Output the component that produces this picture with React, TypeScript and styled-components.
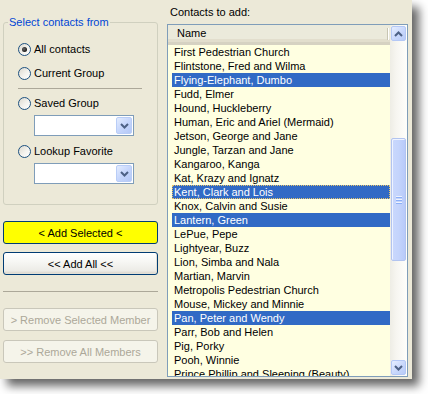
import React from 'react';
import styled, { createGlobalStyle } from 'styled-components';

const Global = createGlobalStyle`
  html, body { margin: 0; padding: 0; background: #ffffff; }
  body { font-family: "Liberation Sans", Arial, sans-serif; font-size: 11px; color: #000; }
  * { box-sizing: border-box; }
`;

const Stage = styled.div`
  width: 428px;
  height: 394px;
  overflow: hidden;
`;

const Window = styled.div`
  width: 412px;
  height: 379px;
  background: #ece9d8;
  box-shadow: 7px 7px 9px rgba(0, 0, 0, 0.6);
  display: flex;
  padding: 0 4px 0 3px;
  gap: 9px;
`;

const LeftColumn = styled.div`
  width: 155px;
  display: flex;
  flex-direction: column;
  padding-top: 16px;
`;

const GroupBox = styled.fieldset`
  margin: 0;
  padding: 0 0 19px 0;
  border: 1px solid #d0d0bf;
  border-radius: 3px;
  height: 189px;
`;

const Legend = styled.legend`
  margin-left: 4px;
  padding: 0 1px;
  color: #0046d5;
  line-height: 13px;
`;

const GroupBody = styled.div`
  display: flex;
  flex-direction: column;
  padding-left: 14px;
`;

const RadioRow = styled.label<{ $top: number }>`
  display: flex;
  align-items: center;
  height: 13px;
  line-height: 13px;
  margin-top: ${(p) => p.$top}px;
  white-space: nowrap;
`;

const RadioCircle = styled.span<{ $checked?: boolean }>`
  width: 13px;
  height: 13px;
  border-radius: 50%;
  border: 1px solid #1c5180;
  background: linear-gradient(135deg, #dcd9cf 0%, #f4f3ee 55%, #ffffff 100%);
  display: flex;
  align-items: center;
  justify-content: center;
  flex: none;
  &::after {
    content: '';
    display: ${(p) => (p.$checked ? 'block' : 'none')};
    width: 5px;
    height: 5px;
    border-radius: 50%;
    background: radial-gradient(circle at 40% 40%, #6a6a6a 0%, #1a1a1a 70%);
  }
`;

const RadioText = styled.span`
  margin-left: 3px;
`;

const GroupSeparator = styled.div`
  height: 1px;
  width: 124px;
  margin-top: 8px;
  background: #aca899;
`;

const Combo = styled.div`
  width: 100px;
  height: 21px;
  margin: 5px 0 0 16px;
  border: 1px solid #7f9db9;
  background: #fff;
  display: flex;
  justify-content: flex-end;
  padding: 1px;
`;

const ComboButton = styled.div`
  width: 16px;
  height: 100%;
  border-radius: 2px;
  border: 1px solid #b9cdf7;
  background: linear-gradient(135deg, #e3ecfe 0%, #c6d6fc 50%, #b4c8f6 100%);
  display: flex;
  align-items: center;
  justify-content: center;
`;

const ButtonStack = styled.div`
  display: flex;
  flex-direction: column;
  margin-top: 16px;
`;

const XPButton = styled.button<{ $variant?: 'yellow' | 'normal' | 'disabled'; $top: number }>`
  width: 155px;
  height: 23px;
  margin: ${(p) => p.$top}px 0 0 0;
  padding: 0;
  font-family: inherit;
  font-size: 11px;
  border-radius: 3px;
  border: 1px solid ${(p) => (p.$variant === 'disabled' ? '#c9c7ba' : '#003c74')};
  color: ${(p) => (p.$variant === 'disabled' ? '#aca899' : '#000')};
  background: ${(p) =>
    p.$variant === 'yellow'
      ? '#ffff00'
      : p.$variant === 'disabled'
      ? '#f5f4ea'
      : 'linear-gradient(180deg, #ffffff 0%, #f7f7f4 40%, #ecebe6 85%, #d6d0c5 100%)'};
  box-shadow: ${(p) => (p.$variant === 'normal' ? 'inset -1px -1px 0 #e3e0d6' : 'none')};
`;

const Separator = styled.div`
  height: 1px;
  width: 155px;
  margin-top: 16px;
  background: #aca899;
`;

const RightColumn = styled.div`
  width: 241px;
  display: flex;
  flex-direction: column;
`;

const Caption = styled.div`
  height: 24px;
  padding: 6px 0 0 3px;
  line-height: 13px;
`;

const ListBox = styled.div`
  height: 353px;
  border: 1px solid #7f9db9;
  background: #ffffe1;
  display: flex;
`;

const ListContent = styled.div`
  flex: 1;
  display: flex;
  flex-direction: column;
  overflow: hidden;
`;

const Header = styled.div`
  height: 20px;
  flex: none;
  display: flex;
  background: #ebeadb;
  border-bottom: 3px solid #d6d2c2;
  box-shadow: inset 0 -3px 0 #e2decd;
`;

const HeaderCell = styled.div`
  width: 220px;
  padding-left: 9px;
  line-height: 17px;
  position: relative;
  &::after {
    content: '';
    position: absolute;
    right: 0;
    top: 3px;
    width: 1px;
    height: 12px;
    background: #c7c5b2;
    box-shadow: 1px 0 0 #fff;
  }
`;

const Row = styled.div<{ $selected?: boolean; $focused?: boolean }>`
  height: 14px;
  flex: none;
  margin-left: 4px;
  padding-left: 2px;
  line-height: 14px;
  white-space: nowrap;
  background: ${(p) => (p.$selected ? '#316ac5' : 'transparent')};
  color: ${(p) => (p.$selected ? '#fff' : '#000')};
  outline: ${(p) => (p.$focused ? '1px dotted #e8c66a' : 'none')};
  outline-offset: -1px;
`;

const ScrollBar = styled.div`
  width: 17px;
  flex: none;
  display: flex;
  flex-direction: column;
  align-items: center;
  padding: 1px 0;
  background: linear-gradient(90deg, #eeede5 0%, #f7f6f1 40%, #fefefb 100%);
`;

const ScrollButton = styled.div`
  width: 15px;
  height: 15px;
  flex: none;
  border-radius: 2px;
  border: 1px solid #b4c8f6;
  background: linear-gradient(135deg, #e6eeff 0%, #c9d8fc 55%, #b8cbf7 100%);
  display: flex;
  align-items: center;
  justify-content: center;
`;

const Thumb = styled.div<{ $top: number; $height: number }>`
  width: 15px;
  flex: none;
  margin-top: ${(p) => p.$top}px;
  height: ${(p) => p.$height}px;
  border-radius: 2px;
  border: 1px solid #b2c4f0;
  background: linear-gradient(90deg, #cad8fd 0%, #c4d4fc 50%, #b8cafa 100%);
  box-shadow: inset 1px 1px 0 #eef3ff;
  display: flex;
  flex-direction: column;
  align-items: center;
  justify-content: center;
  gap: 1px;
`;

const Grip = styled.span`
  width: 6px;
  height: 1px;
  background: #eef2fd;
  box-shadow: 0 1px 0 #8cb0f8;
  margin-bottom: 1px;
`;

const Filler = styled.div`
  flex: 1;
`;

const Chevron = ({ up }: { up?: boolean }) => (
  <svg width="9" height="6" viewBox="0 0 9 6">
    <polyline
      points={up ? '1,5 4.5,1.5 8,5' : '1,1 4.5,4.5 8,1'}
      fill="none"
      stroke="#4d6185"
      strokeWidth="2"
    />
  </svg>
);

const contacts: { name: string; selected?: boolean; focused?: boolean }[] = [
  { name: 'First Pedestrian Church' },
  { name: 'Flintstone, Fred and Wilma' },
  { name: 'Flying-Elephant, Dumbo', selected: true },
  { name: 'Fudd, Elmer' },
  { name: 'Hound, Huckleberry' },
  { name: 'Human, Eric and Ariel (Mermaid)' },
  { name: 'Jetson, George and Jane' },
  { name: 'Jungle, Tarzan and Jane' },
  { name: 'Kangaroo, Kanga' },
  { name: 'Kat, Krazy and Ignatz' },
  { name: 'Kent, Clark and Lois', selected: true, focused: true },
  { name: 'Knox, Calvin and Susie' },
  { name: 'Lantern, Green', selected: true },
  { name: 'LePue, Pepe' },
  { name: 'Lightyear, Buzz' },
  { name: 'Lion, Simba and Nala' },
  { name: 'Martian, Marvin' },
  { name: 'Metropolis Pedestrian Church' },
  { name: 'Mouse, Mickey and Minnie' },
  { name: 'Pan, Peter and Wendy', selected: true },
  { name: 'Parr, Bob and Helen' },
  { name: 'Pig, Porky' },
  { name: 'Pooh, Winnie' },
  { name: 'Prince Phillip and Sleeping (Beauty)' },
];

export default function App() {
  return (
    <Stage>
      <Global />
      <Window>
        <LeftColumn>
          <GroupBox>
            <Legend>Select contacts from</Legend>
            <GroupBody>
              <RadioRow $top={14}>
                <RadioCircle $checked />
                <RadioText>All contacts</RadioText>
              </RadioRow>
              <RadioRow $top={11}>
                <RadioCircle />
                <RadioText>Current Group</RadioText>
              </RadioRow>
              <GroupSeparator />
              <RadioRow $top={8}>
                <RadioCircle />
                <RadioText>Saved Group</RadioText>
              </RadioRow>
              <Combo>
                <ComboButton>
                  <Chevron />
                </ComboButton>
              </Combo>
              <RadioRow $top={9}>
                <RadioCircle />
                <RadioText>Lookup Favorite</RadioText>
              </RadioRow>
              <Combo>
                <ComboButton>
                  <Chevron />
                </ComboButton>
              </Combo>
            </GroupBody>
          </GroupBox>
          <ButtonStack>
            <XPButton $variant="yellow" $top={0}>&lt; Add Selected &lt;</XPButton>
            <XPButton $variant="normal" $top={8}>&lt;&lt; Add All &lt;&lt;</XPButton>
            <Separator />
            <XPButton $variant="disabled" $top={16} disabled>
              &gt; Remove Selected Member
            </XPButton>
            <XPButton $variant="disabled" $top={9} disabled>
              &gt;&gt; Remove All Members
            </XPButton>
          </ButtonStack>
        </LeftColumn>
        <RightColumn>
          <Caption>Contacts to add:</Caption>
          <ListBox>
            <ListContent>
              <Header>
                <HeaderCell>Name</HeaderCell>
              </Header>
              {contacts.map((c) => (
                <Row key={c.name} $selected={c.selected} $focused={c.focused}>
                  {c.name}
                </Row>
              ))}
            </ListContent>
            <ScrollBar>
              <ScrollButton>
                <Chevron up />
              </ScrollButton>
              <Thumb $top={97} $height={123}>
                <Grip />
                <Grip />
                <Grip />
              </Thumb>
              <Filler />
              <ScrollButton>
                <Chevron />
              </ScrollButton>
            </ScrollBar>
          </ListBox>
        </RightColumn>
      </Window>
    </Stage>
  );
}
